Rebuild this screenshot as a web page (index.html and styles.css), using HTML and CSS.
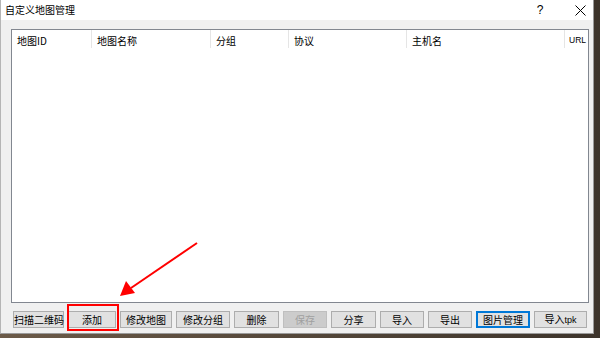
FILE: index.html
```html
<!DOCTYPE html>
<html lang="zh-CN">
<head>
  <meta charset="UTF-8">
  <title>自定义地图管理</title>
  <link rel="stylesheet" href="styles.css">
</head>
<body>
  <div class="desktop">
    <div class="window">
      <div class="titlebar">
        <span class="title">自定义地图管理</span>
        <span class="help">?</span>
        <span class="close">
          <svg width="11" height="11" viewBox="0 0 11 11"><path d="M0.5 0.5 L10.5 10.5 M10.5 0.5 L0.5 10.5" stroke="#000" stroke-width="1" fill="none"/></svg>
        </span>
      </div>

      <div class="content">
        <div class="list">
          <div class="list-head">
            <div class="col c-id">地图ID</div>
            <div class="col c-name">地图名称</div>
            <div class="col c-group">分组</div>
            <div class="col c-proto">协议</div>
            <div class="col c-host">主机名</div>
            <div class="col c-url">URL</div>
          </div>
        </div>

        <div class="buttons">
          <button class="b-scan">扫描二维码</button>
          <button class="b-add marked">添加</button>
          <button class="b-edit">修改地图</button>
          <button class="b-group">修改分组</button>
          <button class="b-del">删除</button>
          <button class="b-save" disabled>保存</button>
          <button class="b-share">分享</button>
          <button class="b-imp">导入</button>
          <button class="b-exp">导出</button>
          <button class="b-pic focus">图片管理</button>
          <button class="b-tpk">导入<span class="latin">tpk</span></button>
        </div>
      </div>
    </div>

    <!-- annotation arrow -->
    <svg class="arrow" width="600" height="338" viewBox="0 0 600 338">
      <line x1="197" y1="243" x2="131" y2="288" stroke="#ff0000" stroke-width="2"/>
      <polygon points="120,296 126,281 135,293" fill="#ff0000"/>
    </svg>
  </div>
</body>
</html>
```

FILE: styles.css
```css
body {
  margin: 0;
  font-family: "Noto Sans CJK SC", "Liberation Sans", sans-serif;
  font-size: 10px;
  color: #000;
}

.desktop {
  position: relative;
  width: 600px;
  height: 338px;
  background: linear-gradient(to right, #6b5a48, #3d342b);
  overflow: hidden;
}

.window {
  width: 594px;
  height: 334px;
  background-color: #f0f0f0;
  border-left: 1px solid #b5b5b5;
  border-right: 1px solid #9a9a9a;
  border-bottom: 1px solid #9a9a9a;
  box-sizing: border-box;
  display: flex;
  flex-direction: column;
}

.titlebar {
  height: 20px;
  background-color: #ffffff;
  display: flex;
  align-items: center;
  padding-left: 4px;
}

.title {
  flex: 1;
  line-height: 20px;
}

.help {
  width: 20px;
  text-align: center;
  font-family: "Liberation Sans", sans-serif;
  font-size: 12px;
  margin-right: 20px;
}

.close {
  width: 20px;
  display: flex;
  justify-content: center;
  margin-right: 3px;
}

.content {
  padding: 9px 4px 0 10px;
}

.list {
  height: 274px;
  border: 1px solid #828790;
  background-color: #ffffff;
  box-sizing: border-box;
}

.list-head {
  display: flex;
  height: 18px;
}

.col {
  box-sizing: border-box;
  padding-left: 5px;
  line-height: 21px;
  border-right: 1px solid #e5e5e5;
  white-space: nowrap;
}

.c-id { width: 80px; }
.c-name { width: 119px; }
.c-group { width: 78px; }
.c-proto { width: 118px; }
.c-host { width: 158px; }
.c-url {
  flex: 1;
  border-right: none;
  font-family: "Liberation Sans", sans-serif;
  font-size: 8.5px;
  padding-left: 4px;
}

.buttons {
  display: flex;
  gap: 4px;
  margin-top: 8px;
  padding-left: 2px;
}

button {
  position: relative;
  height: 17px;
  padding: 0;
  background-color: #e1e1e1;
  border: 1px solid #adadad;
  font-family: "Noto Sans CJK SC", sans-serif;
  font-size: 10px;
  line-height: 14px;
  color: #000;
  white-space: nowrap;
}

button .latin {
  font-family: "Liberation Sans", sans-serif;
  font-size: 9px;
}

button:disabled {
  color: #a0a0a0;
  background-color: #cccccc;
  border-color: #bfbfbf;
}

button.focus {
  border: 2px solid #0078d7;
  line-height: 12px;
}

button.marked::after {
  content: "";
  position: absolute;
  top: -8px;
  left: -2px;
  right: -4px;
  bottom: -4px;
  border: 2px solid #ff0000;
}

.b-scan { width: 51px; }
.b-add { width: 48px; }
.b-edit { width: 52px; }
.b-group { width: 54px; }
.b-del { width: 45px; }
.b-save { width: 44px; }
.b-share { width: 45px; }
.b-imp { width: 44px; }
.b-exp { width: 44px; }
.b-pic { width: 54px; }
.b-tpk { width: 53px; }

.arrow {
  position: absolute;
  left: 0;
  top: 0;
}
```
